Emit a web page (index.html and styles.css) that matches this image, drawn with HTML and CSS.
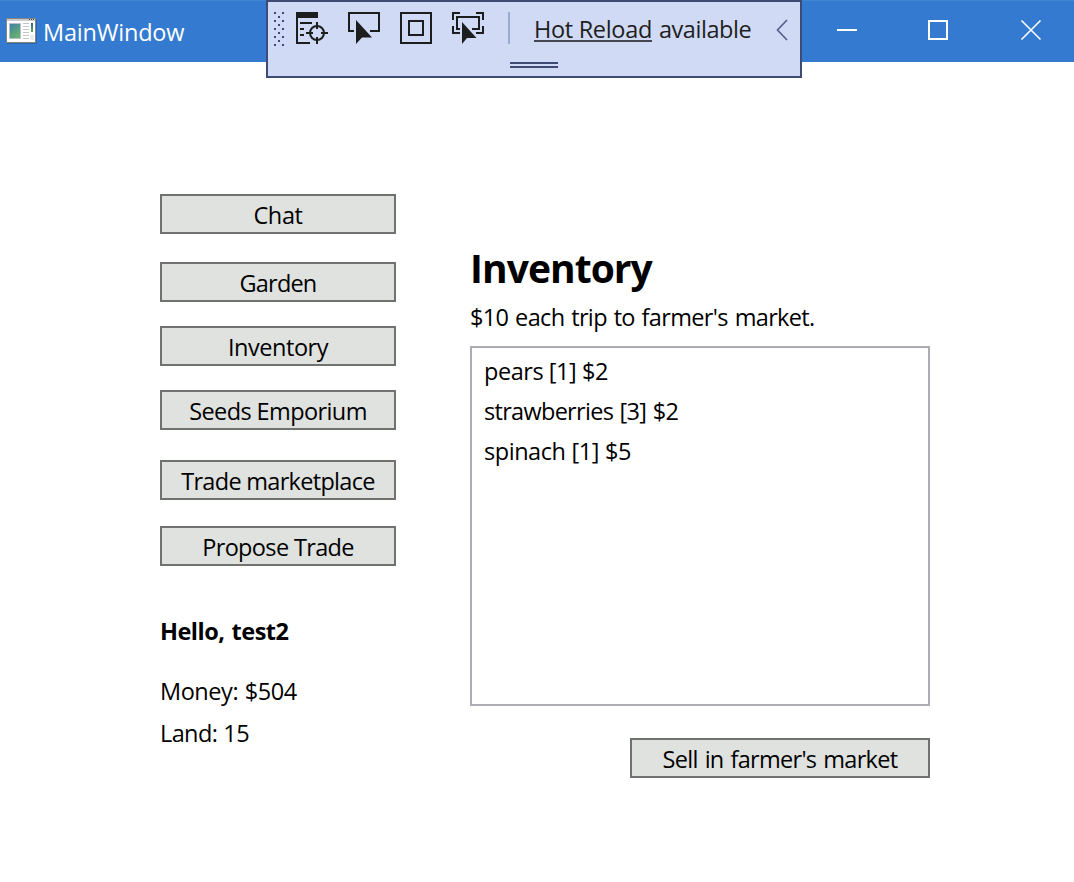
FILE: index.html
```html
<!DOCTYPE html>
<html lang="en">
<head>
<meta charset="utf-8">
<title>MainWindow</title>
<link rel="stylesheet" href="styles.css">
</head>
<body>
<header class="titlebar">
  <svg class="app-icon" width="32" height="28" viewBox="0 0 32 28">
    <defs>
      <linearGradient id="pane" x1="0" y1="0" x2="0.6" y2="1"><stop offset="0" stop-color="#3f7fa6"/><stop offset="1" stop-color="#68b36c"/></linearGradient>
      <linearGradient id="bar" x1="0" y1="0" x2="0" y2="1"><stop offset="0" stop-color="#315b9c"/><stop offset="1" stop-color="#5cab50"/></linearGradient>
    </defs>
    <path d="M1 1h30v25H1z" fill="#245b9c" opacity=".6"/>
    <path d="M.5.5h29v24H.5z" fill="#fff" stroke="#85857f"/>
    <path d="M1 1h28v2H1z" fill="#c8cbd0"/>
    <path d="M23 1h1v1h-1zM25 1h1v1h-1zM27 1h1v1h-1z" fill="#444"/>
    <path d="M3.500 5.500h11v15h-11z" fill="url(#pane)" stroke="#b6bccb"/>
    <path d="M17 5.500h6M17 8.500h6M17 11.500h6M17 14.500h6M17 17.500h6M17 20.500h6" stroke="#c4c4c4"/>
    <path d="M25 5h2v9h-2z" fill="url(#bar)"/>
    <path d="M24 17h4v5h-4z" fill="#ececec"/>
  </svg>
  <span class="title">MainWindow</span>
  <svg class="win-controls" width="206" height="24" viewBox="836 18 206 24" fill="none" stroke="#fff" stroke-width="2">
    <path d="M837 30h20M929 21h18v18h-18z"/>
    <path d="M1021.500 20.500l19 19M1040.500 20.500l-19 19" stroke-width="1.600"/>
  </svg>
</header>

<div class="debug-bar">
  <div class="debug-row">
    <svg width="242" height="36" viewBox="268 10 242 36">
      <path fill="#3f4a78" d="M274 12h2v2h-2zM282 12h2v2h-2zM278 16h2v2h-2zM274 20h2v2h-2zM282 20h2v2h-2zM278 24h2v2h-2zM274 28h2v2h-2zM282 28h2v2h-2zM278 32h2v2h-2zM274 36h2v2h-2zM282 36h2v2h-2zM278 40h2v2h-2zM274 44h2v2h-2zM282 44h2v2h-2z"/>
      <g fill="#1c1e1e">
        <path d="M296 12h22v6h-20v24h12v2h-14zM300 22h12v2h-12zM300 28h4v2h-4zM300 34h4v2h-4z"/>
        <path d="M356 20v24l6-6.500h10z"/>
        <path d="M462 22v22l5-6h9.500z"/>
      </g>
      <g fill="none" stroke="#1c1e1e" stroke-width="2">
        <circle cx="317" cy="33" r="7"/>
        <path d="M317 22v7M317 37v7M306 33h7M321 33h7"/>
        <path d="M354 31h-5V13h30v18h-9"/>
        <path d="M401 13h30v30h-30zM409 21h14v14h-14z"/>
        <path d="M453 20v-7h7M476 13h7v7M453 26v7h7M483 26v7h-7M460 29h-3V17h22v12h-7"/>
      </g>
      <path d="M508 12h2v32h-2z" fill="#9aaad0"/>
    </svg>
    <span class="message"><span class="reload">Hot Reload</span><span class="available">available</span></span>
    <svg class="chevron" width="12" height="22" viewBox="0 0 12 22" fill="none" stroke="#56608f" stroke-width="1.700"><path d="M11 1L1.500 11L11 21"/></svg>
  </div>
  <div class="handle"></div>
</div>

<main class="window">
  <nav class="menu">
    <button class="btn chat">Chat</button>
    <button class="btn garden">Garden</button>
    <button class="btn inventory">Inventory</button>
    <button class="btn seeds">Seeds Emporium</button>
    <button class="btn marketplace">Trade marketplace</button>
    <button class="btn propose">Propose Trade</button>
    <div class="hello">Hello, test2</div>
    <div class="money">Money: $504</div>
    <div class="land">Land: 15</div>
  </nav>
  <section class="content">
    <h1 class="heading">Inventory</h1>
    <p class="note">$10 each trip to farmer's market.</p>
    <ul class="items">
      <li class="pears">pears [1] $2</li>
      <li class="strawberries">strawberries [3] $2</li>
      <li class="spinach">spinach [1] $5</li>
    </ul>
    <button class="btn sell">Sell in farmer's market</button>
  </section>
</main>
</body>
</html>
```
FILE: styles.css
```css
* { box-sizing: border-box; }
body {
  margin: 0;
  height: 882px;
  overflow: hidden;
  background: #fff;
  color: #000;
  font-family: "Open Sans", "Noto Sans", sans-serif;
  font-size: 23.5px;
  line-height: 40px;
}
svg { display: block; flex: none; }

.titlebar {
  display: flex;
  align-items: flex-start;
  height: 62px;
  padding: 0 32px 0 6px;
  background: #337ad0;
  border-top: 1px solid #3d86d1;
}
.app-icon { margin-top: 17px; }
.title { margin: 11px 0 0 5px; color: #fff; letter-spacing: -0.2px; }
.win-controls { margin: 17px 0 0 auto; }

/* Debugger toolbar floats over the window */
.debug-bar {
  position: absolute;
  left: 266px;
  top: 0;
  width: 536px;
  height: 78px;
  border: 2px solid #3f4a75;
  background: #d0daf5;
}
.debug-row { display: flex; padding: 8px 12px 0 0; height: 60px; }
.message { display: flex; gap: 7px; margin-left: 24px; color: #1e1e1e; }
.reload {
  height: 32px;
  line-height: 38px;
  border-bottom: 2px solid #444750;
  letter-spacing: -0.32px;
}
.available { line-height: 38px; letter-spacing: -0.45px; }
.chevron { margin: 9px 0 0 auto; }
.handle {
  width: 48px;
  height: 6px;
  margin-left: 242px;
  border: solid #3f4a75;
  border-width: 2px 0;
}

.window {
  display: grid;
  grid-template-columns: 236px 460px;
  column-gap: 74px;
  padding: 132px 0 0 160px;
}
.menu { display: flex; flex-direction: column; }
.btn {
  flex: none;
  height: 40px;
  margin: 0;
  padding: 3px 0 0;
  border: 2px solid #707270;
  border-radius: 0;
  background: #dfe2df;
  color: #000;
  font: inherit;
  line-height: 33px;
}
.chat { letter-spacing: -0.4px; }
.garden { margin-top: 28px; letter-spacing: -0.8px; }
.inventory { margin-top: 24px; letter-spacing: -0.45px; }
.seeds { margin-top: 24px; letter-spacing: -0.6px; }
.marketplace { margin-top: 30px; letter-spacing: -0.7px; }
.propose { margin-top: 26px; letter-spacing: -0.65px; }
.hello { margin: 45px 0 0; font-weight: 700; letter-spacing: -0.5px; word-spacing: 1.5px; }
.money { margin: 20px 0 0; letter-spacing: -0.45px; word-spacing: 1px; }
.land { margin: 2px 0 0; letter-spacing: -0.6px; word-spacing: 0.5px; }

.content { display: flex; flex-direction: column; padding-top: 49px; }
.heading {
  margin: 0 0 4px;
  font-size: 39px;
  line-height: 50px;
  font-weight: 700;
  letter-spacing: -0.95px;
}
.note { margin: 0 0 9px; letter-spacing: -0.65px; word-spacing: 1.3px; }
.items {
  height: 360px;
  margin: 0;
  padding: 3px 12px;
  border: 2px solid #abadb3;
  list-style: none;
}
.pears { letter-spacing: -0.45px; }
.strawberries { letter-spacing: -0.7px; word-spacing: 1px; }
.spinach { letter-spacing: -0.45px; word-spacing: 0.4px; }
.sell { width: 300px; margin: 32px 0 0 auto; letter-spacing: -0.7px; word-spacing: 1.5px; }
```
